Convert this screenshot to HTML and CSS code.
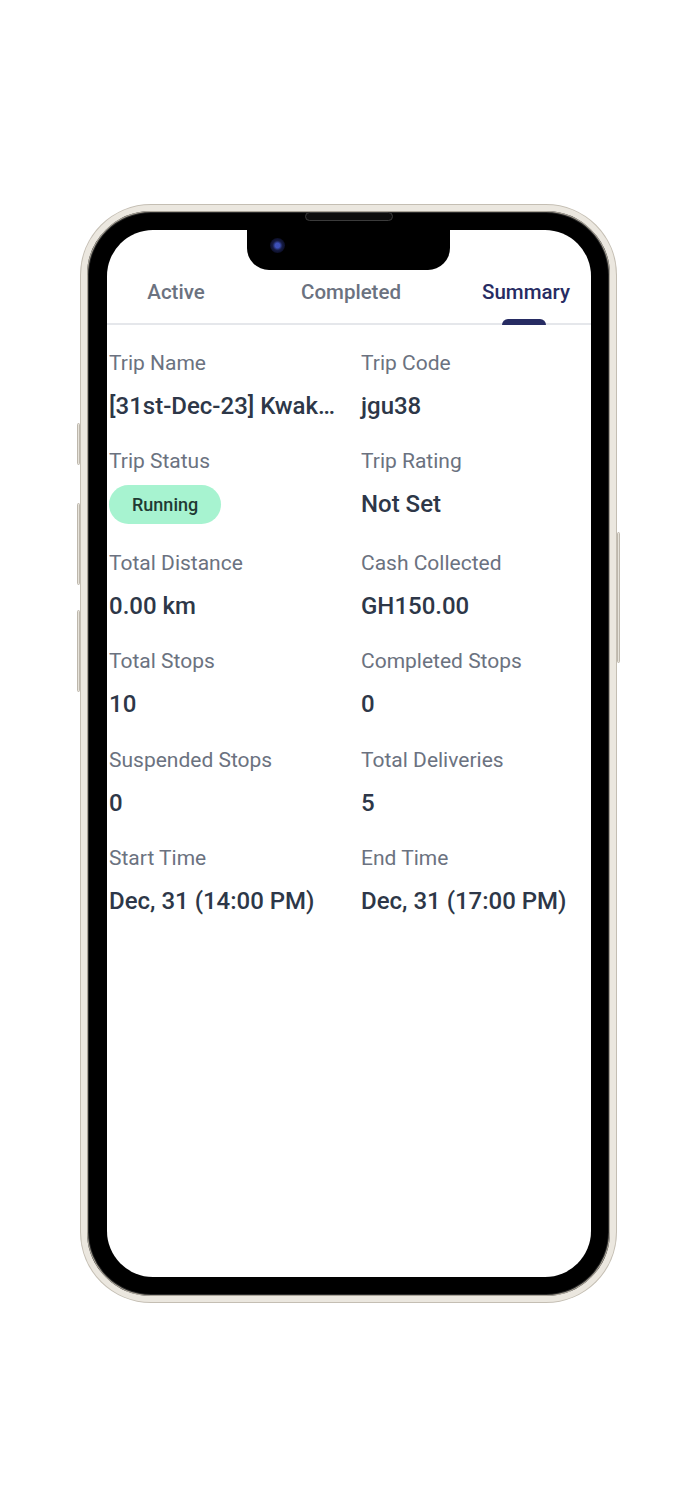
FILE: index.html
```html
<!DOCTYPE html>
<html lang="en">
<head>
<meta charset="utf-8">
<title>Trip Summary</title>
<link rel="stylesheet" href="styles.css">
</head>
<body>
<div class="stage">
  <div class="phone">
    <span class="btn btn-mute"></span>
    <span class="btn btn-vol-up"></span>
    <span class="btn btn-vol-down"></span>
    <span class="btn btn-power"></span>
    <span class="speaker"></span>
    <div class="screen">
      <div class="notch"><span class="camera"></span></div>
      <nav class="tabs">
        <div class="tab"><span class="tab-label">Active</span></div>
        <div class="tab"><span class="tab-label">Completed</span></div>
        <div class="tab tab-active"><span class="tab-label">Summary</span><span class="indicator"></span></div>
      </nav>
      <section class="summary">
        <div class="field">
          <div class="label">Trip Name</div>
          <div class="value value-trunc">[31st-Dec-23] Kwak…</div>
        </div>
        <div class="field">
          <div class="label">Trip Code</div>
          <div class="value">jgu38</div>
        </div>
        <div class="field field-status">
          <div class="label">Trip Status</div>
          <div class="value"><span class="badge">Running</span></div>
        </div>
        <div class="field field-status">
          <div class="label">Trip Rating</div>
          <div class="value">Not Set</div>
        </div>
        <div class="field">
          <div class="label">Total Distance</div>
          <div class="value">0.00 km</div>
        </div>
        <div class="field">
          <div class="label">Cash Collected</div>
          <div class="value">GH150.00</div>
        </div>
        <div class="field">
          <div class="label">Total Stops</div>
          <div class="value">10</div>
        </div>
        <div class="field">
          <div class="label">Completed Stops</div>
          <div class="value">0</div>
        </div>
        <div class="field">
          <div class="label">Suspended Stops</div>
          <div class="value">0</div>
        </div>
        <div class="field">
          <div class="label">Total Deliveries</div>
          <div class="value">5</div>
        </div>
        <div class="field">
          <div class="label">Start Time</div>
          <div class="value">Dec, 31 (14:00 PM)</div>
        </div>
        <div class="field">
          <div class="label">End Time</div>
          <div class="value">Dec, 31 (17:00 PM)</div>
        </div>
      </section>
    </div>
  </div>
</div>
</body>
</html>
```

FILE: styles.css
```css
* { box-sizing: border-box; }

html, body {
  margin: 0;
  padding: 0;
  background: #ffffff;
  font-family: Roboto, "Noto Sans", "Liberation Sans", sans-serif;
}

.stage {
  width: 693px;
  height: 1500px;
  padding-top: 205px;
  padding-left: 81px;
}

.phone {
  position: relative;
  width: 535px;
  height: 1097px;
  border: 6px solid #ebe7df;
  border-radius: 70px;
  background: #000000;
  padding: 19px 19px 19px 20px;
  box-shadow: 0 0 0 1px #c4beb3, inset 0 0 0 1px #aaa498, inset 0 0 0 2px #2a2a2a;
}

.btn {
  position: absolute;
  width: 3px;
  background: #e6e2d9;
  border: 1px solid #bdb7ac;
  border-radius: 2px;
}
.btn-mute { left: -10px; top: 212px; height: 42px; }
.btn-vol-up { left: -10px; top: 292px; height: 82px; }
.btn-vol-down { left: -10px; top: 399px; height: 82px; }
.btn-power { right: -10px; top: 321px; height: 131px; }

.speaker {
  position: absolute;
  top: 1px;
  left: 218px;
  width: 88px;
  height: 9px;
  border-radius: 5px;
  background: #0d0d0d;
  border: 1px solid #3b3b3b;
}

.screen {
  position: relative;
  height: 100%;
  background: #ffffff;
  border-radius: 46px;
  overflow: hidden;
}

.notch {
  position: absolute;
  top: 0;
  left: 140px;
  width: 203px;
  height: 40px;
  background: #000000;
  border-radius: 0 0 22px 22px;
}

.camera {
  position: absolute;
  left: 23px;
  top: 8px;
  width: 15px;
  height: 15px;
  border-radius: 50%;
  background: radial-gradient(circle, #3d50b8 0 22%, #161c44 45%, #08091c 80%);
}

.tabs {
  display: grid;
  grid-template-columns: 138px 212px 1fr;
  padding-top: 50px;
  border-bottom: 2px solid #e5e7eb;
}

.tab {
  display: flex;
  flex-direction: column;
  align-items: center;
}

.tab-label {
  font-size: 20.5px;
  line-height: 25px;
  font-weight: 500;
  color: #6b7280;
}

.tab-active .tab-label {
  color: #272c63;
  transform: translateX(2px);
}

.indicator {
  position: relative;
  width: 44px;
  height: 6px;
  margin-top: 14px;
  margin-bottom: -2px;
  background: #272c63;
  border-radius: 6px 6px 0 0;
}

.summary {
  display: grid;
  grid-template-columns: 252px 1fr;
  row-gap: 29.4px;
  padding: 26px 0 0 2px;
}

.field-status {
  padding-bottom: 2px;
}

.label {
  font-size: 21px;
  line-height: 25px;
  color: #6b7280;
  white-space: nowrap;
}

.value {
  margin-top: 16px;
  font-size: 24px;
  line-height: 28px;
  font-weight: 500;
  color: #2d3748;
  white-space: nowrap;
}

.value-trunc {
  max-width: 240px;
}

.badge {
  display: inline;
  padding: 9px 23px;
  border-radius: 20px;
  background: #a7f3d0;
  color: #1f3a33;
  font-size: 18px;
  font-weight: 500;
  vertical-align: 1px;
}
```
